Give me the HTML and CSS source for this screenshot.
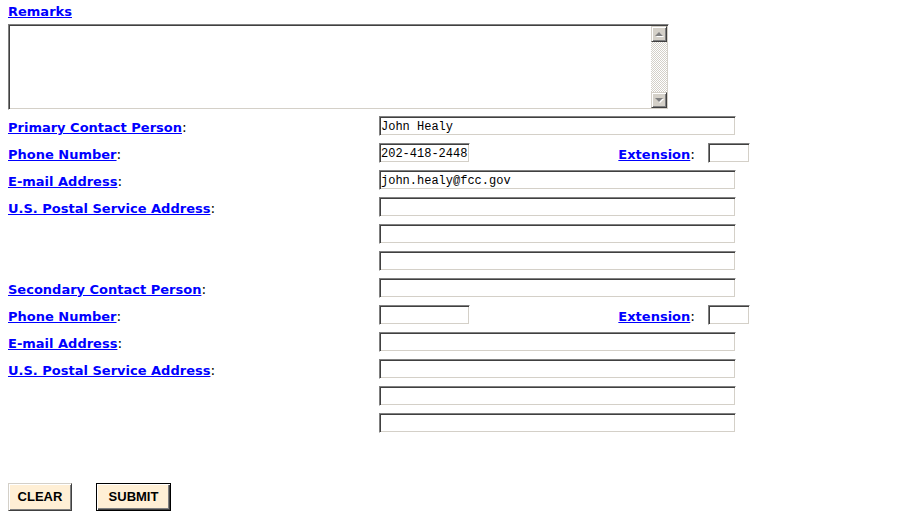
FILE: index.html
```html
<!DOCTYPE html>
<html lang="en">

<head>
    <meta charset="UTF-8">
    <meta name="viewport" content="width=device-width, initial-scale=1.0">
    <title>Contact Information</title>
    <link rel="stylesheet" href="styles.css">
</head>

<body>
    <div class="remarks-label"><a href="#">Remarks</a></div>
    <div class="remarks-box">
        <textarea class="remarks-text" name="remarks"></textarea>
        <!-- old style scrollbar -->
        <div class="scrollbar">
            <div class="scroll-btn"><span class="arrow-up"></span></div>
            <div class="scroll-track"></div>
            <div class="scroll-btn"><span class="arrow-down"></span></div>
        </div>
    </div>

    <div class="contact-grid">
        <!-- primary contact -->
        <div class="label"><a href="#">Primary Contact Person</a><span class="colon">:</span></div>
        <div class="field"><input type="text" class="wide" value="John Healy"></div>

        <div class="label"><a href="#">Phone Number</a><span class="colon">:</span></div>
        <div class="field phone">
            <input type="text" class="short" value="202-418-2448">
            <span class="ext"><a href="#">Extension</a><span class="colon">:</span></span>
            <input type="text" class="tiny">
        </div>

        <div class="label"><a href="#">E-mail Address</a><span class="colon">:</span></div>
        <div class="field"><input type="text" class="wide" value="john.healy@fcc.gov"></div>

        <div class="label"><a href="#">U.S. Postal Service Address</a><span class="colon">:</span></div>
        <div class="field"><input type="text" class="wide"></div>
        <div class="label"></div>
        <div class="field"><input type="text" class="wide"></div>
        <div class="label"></div>
        <div class="field"><input type="text" class="wide"></div>

        <!-- secondary contact -->
        <div class="label"><a href="#">Secondary Contact Person</a><span class="colon">:</span></div>
        <div class="field"><input type="text" class="wide"></div>

        <div class="label"><a href="#">Phone Number</a><span class="colon">:</span></div>
        <div class="field phone">
            <input type="text" class="short">
            <span class="ext"><a href="#">Extension</a><span class="colon">:</span></span>
            <input type="text" class="tiny">
        </div>

        <div class="label"><a href="#">E-mail Address</a><span class="colon">:</span></div>
        <div class="field"><input type="text" class="wide"></div>

        <div class="label"><a href="#">U.S. Postal Service Address</a><span class="colon">:</span></div>
        <div class="field"><input type="text" class="wide"></div>
        <div class="label"></div>
        <div class="field"><input type="text" class="wide"></div>
        <div class="label"></div>
        <div class="field"><input type="text" class="wide"></div>
    </div>

    <div class="buttons">
        <button class="btn clear">CLEAR</button>
        <button class="btn submit">SUBMIT</button>
    </div>
</body>

</html>
```

FILE: styles.css
```css
body {
    margin: 0;
    padding: 4px 8px 0;
    font-family: "DejaVu Sans", Verdana, sans-serif;
    font-size: 13px;
    background-color: #fff;
    color: #000;
}

a {
    color: #0000ff;
    font-weight: bold;
    text-decoration: underline;
}

.remarks-label {
    line-height: 16px;
}

.remarks-box {
    display: flex;
    width: 661px;
    height: 86px;
    box-sizing: border-box;
    margin-top: 4px;
    border: 1px solid;
    border-color: #808080 #fff #fff #808080;
    box-shadow: inset 1px 1px #404040, inset -1px -1px #d4d0c8;
    padding: 1px;
}

.remarks-text {
    flex: 1;
    border: none;
    resize: none;
    outline: none;
    padding: 0;
    margin: 0;
    font-family: "Liberation Mono", monospace;
    font-size: 12px;
}

.scrollbar {
    width: 16px;
    display: flex;
    flex-direction: column;
}

.scroll-btn {
    height: 16px;
    box-sizing: border-box;
    background-color: #d4d0c8;
    border: 1px solid;
    border-color: #d4d0c8 #404040 #404040 #d4d0c8;
    box-shadow: inset 1px 1px #fff, inset -1px -1px #808080;
    display: flex;
    align-items: center;
    justify-content: center;
}

.arrow-up,
.arrow-down {
    width: 0;
    height: 0;
    border-left: 4px solid transparent;
    border-right: 4px solid transparent;
    filter: drop-shadow(1px 1px 0 #fff);
}

.arrow-up {
    border-bottom: 4px solid #808080;
}

.arrow-down {
    border-top: 4px solid #808080;
}

.scroll-track {
    flex: 1;
    background: repeating-conic-gradient(#d4d0c8 0 25%, #fff 0 50%) 0 0 / 2px 2px;
}

.contact-grid {
    display: grid;
    grid-template-columns: 371px 371px;
    grid-auto-rows: 27px;
    margin-top: 3px;
}

.label {
    align-self: center;
    padding-top: 1px;
    white-space: nowrap;
}

.colon {
    font-weight: normal;
    font-size: 14px;
}

.field {
    display: flex;
    align-items: flex-start;
}

.field input {
    margin: 3px 0 0;
    height: 20px;
    box-sizing: border-box;
    padding: 2px 1px 0;
    border: 1px solid;
    border-color: #808080 #fff #fff #808080;
    box-shadow: inset 1px 1px #404040, inset -1px -1px #d4d0c8;
    font-family: "Liberation Mono", monospace;
    font-size: 12px;
    color: #000;
    outline: none;
}

.wide {
    width: 357px;
}

.short {
    width: 91px;
}

.tiny {
    width: 42px;
}

.phone .ext {
    margin-left: auto;
    margin-right: 13px;
    align-self: center;
    padding-top: 1px;
}

.buttons {
    display: flex;
    gap: 24px;
    margin-top: 46px;
}

.btn {
    height: 28px;
    padding: 0 0 1px;
    background-color: #ffefd5;
    font-family: "Liberation Sans", Arial, sans-serif;
    font-weight: bold;
    font-size: 13px;
    color: #000;
    border: 1px solid;
    border-color: #d4d0c8 #404040 #404040 #d4d0c8;
    box-shadow: inset 1px 1px #fff, inset -1px -1px #808080;
}

.clear {
    width: 64px;
}

.submit {
    width: 75px;
    border-color: #000;
    box-shadow: inset 1px 1px #fff, inset -1px -1px #404040, inset -2px -2px #808080;
}
```
